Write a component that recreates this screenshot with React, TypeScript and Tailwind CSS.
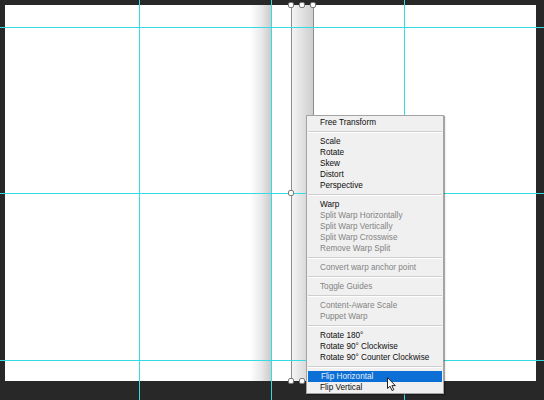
import React from 'react'

type Item = { label: string; disabled?: boolean; active?: boolean } | 'sep'

const menu: Item[] = [
  { label: 'Free Transform' },
  'sep',
  { label: 'Scale' },
  { label: 'Rotate' },
  { label: 'Skew' },
  { label: 'Distort' },
  { label: 'Perspective' },
  'sep',
  { label: 'Warp' },
  { label: 'Split Warp Horizontally', disabled: true },
  { label: 'Split Warp Vertically', disabled: true },
  { label: 'Split Warp Crosswise', disabled: true },
  { label: 'Remove Warp Split', disabled: true },
  'sep',
  { label: 'Convert warp anchor point', disabled: true },
  'sep',
  { label: 'Toggle Guides', disabled: true },
  'sep',
  { label: 'Content-Aware Scale', disabled: true },
  { label: 'Puppet Warp', disabled: true },
  'sep',
  { label: 'Rotate 180°' },
  { label: 'Rotate 90° Clockwise' },
  { label: 'Rotate 90° Counter Clockwise' },
  'sep',
  { label: 'Flip Horizontal', active: true },
  { label: 'Flip Vertical' },
]

// transform handles, root coordinates (centre)
const handles = [
  [291, 5],
  [302, 5],
  [313, 5],
  [291, 193],
  [291, 381],
  [302, 381],
]

export default function App() {
  return (
    <div className="relative w-[544px] h-[400px] overflow-hidden bg-[#282828] pt-[5px] pl-[5px]">
      {/* canvas */}
      <div className="relative w-[531px] h-[376px] bg-white">
        <div className="absolute left-[245px] top-0 h-full w-[22px] bg-gradient-to-r from-white via-[#ebeaea] to-[#c9c7c7]" />
        <div className="absolute left-[286px] top-0 h-full w-[23px] border-x border-[#8d8d8d] bg-gradient-to-r from-[#f4f4f4] to-[#cfcdcd]" />
      </div>

      {/* guides */}
      <div className="absolute top-0 left-[139px] w-px h-full bg-[#33dbe3]" />
      <div className="absolute top-0 left-[271px] w-px h-full bg-[#33dbe3]" />
      <div className="absolute top-0 left-[404px] w-px h-full bg-[#33dbe3]" />
      <div className="absolute left-0 top-[27px] h-px w-full bg-[#33dbe3]" />
      <div className="absolute left-0 top-[193px] h-px w-full bg-[#33dbe3]" />
      <div className="absolute left-0 top-[360px] h-px w-full bg-[#33dbe3]" />

      {handles.map(([x, y], i) => (
        <div
          key={i}
          className="absolute w-[6px] h-[6px] rounded-[2px] border border-[#7a7a7a] bg-white"
          style={{ left: x - 3, top: y - 3 }}
        />
      ))}

      {/* context menu */}
      <div className="absolute left-[306px] top-[115px] w-[138px] flex flex-col border border-[#a3a3a3] bg-[#f0f0f0] pt-px shadow-[1px_1px_1px_rgba(0,0,0,0.35)] font-['Liberation_Sans',Arial,sans-serif] text-[8.2px] leading-[11px]">
        {menu.map((it, i) =>
          it === 'sep' ? (
            <div key={i} className="h-[8px] flex flex-col justify-center px-px">
              <div className="h-px bg-[#cfcfcf]" />
              <div className="h-px bg-white" />
            </div>
          ) : (
            <div
              key={i}
              className={
                'h-[11px] pl-[13px] whitespace-nowrap ' +
                (it.active
                  ? 'mx-px bg-[#0b6fd6] pl-[12px] text-[#e6eef8]'
                  : it.disabled
                  ? 'text-[#838383]'
                  : 'text-[#0d0d0d]')
              }
            >
              {it.label}
            </div>
          )
        )}
      </div>

      {/* cursor */}
      <svg className="absolute left-[387px] top-[377px]" width="10" height="15" viewBox="0 0 10 15">
        <path d="M0.5 0.5 L0.5 11.5 L3 9.2 L5 13.5 L6.8 12.7 L4.9 8.6 L8.3 8.6 Z" fill="white" stroke="#222" strokeWidth="1" strokeLinejoin="round" />
      </svg>
    </div>
  )
}
